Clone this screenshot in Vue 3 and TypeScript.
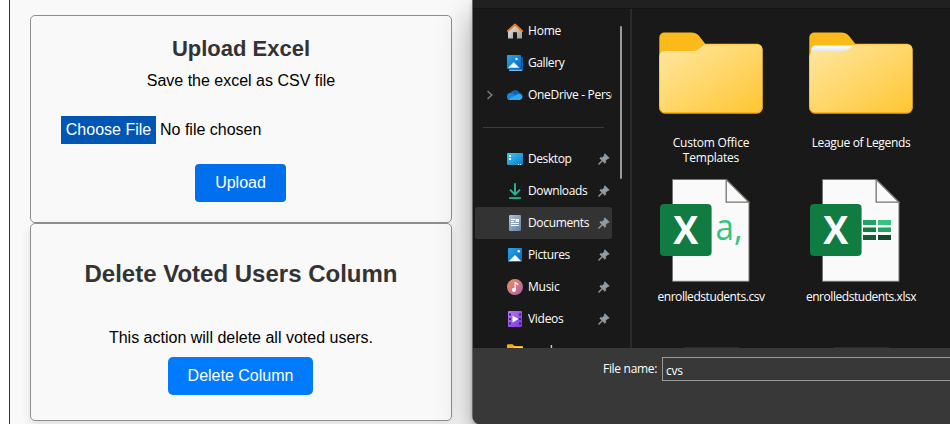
<script setup lang="ts">
import { ref } from 'vue'

interface Place {
  id: string
  label: string
  pinned?: boolean
  expandable?: boolean
  spacing: number
}

interface Item {
  kind: 'folder' | 'folder-full' | 'csv' | 'xlsx'
  label: string
  spacing: number
}

const places: Place[] = [
  { id: 'home', label: 'Home', spacing: -0.2 },
  { id: 'gallery', label: 'Gallery', spacing: -0.4 },
  { id: 'onedrive', label: 'OneDrive - Personal', expandable: true, spacing: -0.3 },
]

const pinned: Place[] = [
  { id: 'desktop', label: 'Desktop', pinned: true, spacing: -0.42 },
  { id: 'downloads', label: 'Downloads', pinned: true, spacing: -0.36 },
  { id: 'documents', label: 'Documents', pinned: true, spacing: -0.34 },
  { id: 'pictures', label: 'Pictures', pinned: true, spacing: -0.38 },
  { id: 'music', label: 'Music', pinned: true, spacing: -0.25 },
  { id: 'videos', label: 'Videos', pinned: true, spacing: -0.3 },
  { id: 'folder', label: 'cvsdocs', spacing: 0 },
]

const items: Item[] = [
  { kind: 'folder', label: 'Custom Office Templates', spacing: -0.22 },
  { kind: 'folder-full', label: 'League of Legends', spacing: -0.34 },
  { kind: 'csv', label: 'enrolledstudents.csv', spacing: -0.43 },
  { kind: 'xlsx', label: 'enrolledstudents.xlsx', spacing: -0.45 },
]

const selected = ref('documents')
const fileName = ref('cvs')
</script>

<template>
  <div class="screen">
    <main class="page">
      <section class="card upload">
        <h2>Upload Excel</h2>
        <p>Save the excel as CSV file</p>
        <div class="picker">
          <button class="choose">Choose File</button>
          <span>No file chosen</span>
        </div>
        <button class="btn hovered">Upload</button>
      </section>
      <section class="card remove">
        <h2>Delete Voted Users Column</h2>
        <p>This action will delete all voted users.</p>
        <button class="btn">Delete Column</button>
      </section>
    </main>

    <div class="dialog">
      <div class="toolbar"></div>
      <div class="body">
        <nav class="sidebar">
          <template v-for="(group, g) in [places, pinned]" :key="g">
            <div v-if="g === 1" class="divider"><i></i></div>
            <div
              v-for="p in group"
              :key="p.id"
              class="place"
              :class="{ active: p.id === selected }"
              @click="selected = p.id"
            >
              <span class="chevron">
                <svg v-if="p.expandable" width="8" height="12" viewBox="0 0 8 12">
                  <path d="M1.5 2 5.8 6 1.5 10" fill="none" stroke="#757575" stroke-width="1.7" />
                </svg>
              </span>
              <svg class="icon" width="16" height="16" viewBox="0 0 16 16">
                <defs>
                  <linearGradient :id="'g-' + p.id" x1="0" y1="0" x2="1" y2="1">
                    <template v-if="p.id === 'home'"><stop offset="0" stop-color="#e8e8e8" /><stop offset="1" stop-color="#9c9c9c" /></template>
                    <template v-else-if="p.id === 'music'"><stop offset="0.1" stop-color="#f08b5c" /><stop offset="1" stop-color="#a45fb5" /></template>
                    <template v-else-if="p.id === 'videos'"><stop offset="0" stop-color="#b57bf3" /><stop offset="1" stop-color="#7a35dc" /></template>
                    <template v-else-if="p.id === 'documents'"><stop offset="0" stop-color="#b4c2d6" /><stop offset="1" stop-color="#64809f" /></template>
                    <template v-else-if="p.id === 'desktop'"><stop offset="0" stop-color="#37cdea" /><stop offset="1" stop-color="#1176c9" /></template>
                    <template v-else><stop offset="0" stop-color="#2aa6ea" /><stop offset="1" stop-color="#0866bd" /></template>
                  </linearGradient>
                </defs>
                <template v-if="p.id === 'home'">
                  <path d="M1 7.5 8 1.5l7 6V15a.6.6 0 0 1-.6.6H10V9.3H6v6.3H1.600A.6.6 0 0 1 1 15Z" fill="url(#g-home)" />
                  <path d="M.9 8 8 1.500l7.100 6.500" fill="none" stroke="#ec7a1c" stroke-width="1.900" stroke-linejoin="round" stroke-linecap="round" />
                </template>
                <template v-else-if="p.id === 'gallery'">
                  <path d="M14.300 2H15a1 1 0 0 1 1 1v11.500a1.500 1.500 0 0 1-1.500 1.500H3a1 1 0 0 1-1-1v-.6h12.300Z" fill="#0a61b5" />
                  <path d="M2 14.400h13v1a1 1 0 0 1-.6.6H3a1 1 0 0 1-1-1Z" fill="#7db4e2" />
                  <rect width="14" height="14" rx="1" fill="url(#g-gallery)" />
                  <path d="M1 12.700 6.700 7.200l5.800 5.500Z" fill="#f2f9ff" />
                  <circle cx="9.500" cy="4" r="1.200" fill="#fff" />
                </template>
                <template v-else-if="p.id === 'onedrive'">
                  <path d="M3.200 7A5.200 5.200 0 0 1 12.600 5.800 3.700 3.700 0 0 1 15.300 11H2Z" fill="#0b69bd" />
                  <path d="M0 9.700A3.500 3.500 0 0 1 5.600 6.500L13 11.500 5 13H3.500A3.400 3.400 0 0 1 0 9.700Z" fill="#1686d6" />
                  <path d="M1.200 12.200 8.800 8.200A5 5 0 0 1 13 7.200 3 3 0 0 1 13 13H3.500a3.200 3.200 0 0 1-2.300-.8Z" fill="#31a7ef" />
                </template>
                <template v-else-if="p.id === 'desktop'">
                  <rect y="2" width="16" height="12" rx="1" fill="url(#g-desktop)" />
                  <path d="M2 4h2v2H2zM2 7h2v2H2z" fill="#fff" />
                  <path d="M11 13h1v1h-1zM13 13h1v1h-1z" fill="#e5f5ff" />
                </template>
                <template v-else-if="p.id === 'downloads'">
                  <path d="M8 .3v11M3 6.700l5 5 5-5" fill="none" stroke="#25b893" stroke-width="1.900" />
                  <rect x="2" y="14" width="12" height="2" rx=".5" fill="#16a78c" />
                </template>
                <template v-else-if="p.id === 'documents'">
                  <rect x="2" width="12" height="16" rx="1" fill="url(#g-documents)" />
                  <path d="M4 4h4v1H4zM4 6h3v1H4zM8.500 4H12v3H8.500zM4 8h8v1H4zM4 10h8v1H4z" fill="#fff" />
                </template>
                <template v-else-if="p.id === 'pictures'">
                  <rect x="1" y="1" width="14" height="14" rx="1" fill="url(#g-pictures)" />
                  <path d="m2 14 6-6 6 6Z" fill="#f4fbff" />
                  <circle cx="11.700" cy="4.200" r="1.200" fill="#fff" />
                </template>
                <template v-else-if="p.id === 'music'">
                  <circle cx="8" cy="8" r="8" fill="url(#g-music)" />
                  <path d="M8.200 3v8" stroke="#fff" stroke-width="1.300" />
                  <path d="M8.200 3.200c.4 1.300 2.400 1.300 2.600 3" fill="none" stroke="#fff" stroke-width="1.500" />
                  <circle cx="6.900" cy="11" r="2" fill="#fff" />
                </template>
                <template v-else-if="p.id === 'videos'">
                  <rect x="1" width="14" height="16" rx="1" fill="url(#g-videos)" />
                  <path d="M2 2.500h2v2H2zM2 7h2v2H2zM2 11.500h2v2H2zM12 2.500h2v2h-2zM12 7h2v2h-2zM12 11.500h2v2h-2z" fill="#4b1697" />
                  <path d="m5.500 4.500 6 3.500-6 3.500Z" fill="#fff" />
                </template>
                <template v-else>
                  <path d="M0 2.200A1 1 0 0 1 1 1.200h4.500L7.500 3H15a1 1 0 0 1 1 1v10H0Z" fill="#f9ae0e" />
                  <path d="M0 5.700h6L7.500 4H16v10H0Z" fill="#ffdc73" />
                </template>
              </svg>
              <span class="name" :style="{ letterSpacing: p.spacing + 'px' }">{{ p.label }}</span>
              <svg v-if="p.pinned" class="pin" width="12" height="12" viewBox="0 0 12 12">
                <path d="M6.900.6 11.400 5 10 6l-.5-.1-1.700 1.700.1 1.800-1 1L4.600 8.200 1.300 11.400.4 11.500.5 10.600 3.700 7.400 1.600 5.200l1-1 1.900.2L6.200 2.500 6 1.600Z" fill="#929ba3" stroke="#929ba3" stroke-width=".3" />
              </svg>
            </div>
          </template>
          <div class="scrollbar"></div>
        </nav>

        <div class="files">
          <div v-for="item in items" :key="item.label" class="tile">
            <svg width="104" height="104" viewBox="0 0 104 104">
              <template v-if="item.kind === 'folder' || item.kind === 'folder-full'">
                <defs>
                  <linearGradient :id="'f-' + item.kind" x1="0" y1="0" x2="1" y2="1">
                    <stop offset="0" stop-color="#ffe7a2" />
                    <stop offset="1" stop-color="#ffc632" />
                  </linearGradient>
                  <linearGradient :id="'p-' + item.kind" x1="0" y1="0" x2="0" y2="1">
                    <stop offset="0" stop-color="#fff" />
                    <stop offset="1" stop-color="#cdd5df" />
                  </linearGradient>
                </defs>
                <path d="M.3 12.500a5 5 0 0 1 5-5H32c4 0 6.500 1.500 8.500 4l5.700 7.200H98a5.500 5.500 0 0 1 5.500 5.500V83a5.500 5.500 0 0 1-5.500 5.500H5.800A5.500 5.500 0 0 1 .3 83Z" fill="#fbb91b" />
                <path v-if="item.kind === 'folder-full'" d="M2 25a5 5 0 0 1 5-4.500h39L37 30H2Z" :fill="'url(#p-' + item.kind + ')'" />
                <path d="M.3 31.500a5.500 5.500 0 0 1 5.500-5.500H33c4 0 6-1.200 8-3l2.400-2c1.500-1.100 2.500-1.500 4.500-1.500H98a5.500 5.500 0 0 1 5.500 5.500V82.500A5.500 5.500 0 0 1 98 87.500H5.800a5.500 5.500 0 0 1-5.500-5.500Z" :fill="'url(#f-' + item.kind + ')'" />
                <path d="M.6 82a5.500 5.500 0 0 0 5.500 6H97.700a5.500 5.500 0 0 0 5.500-6" fill="none" stroke="#e3a00f" stroke-width="1" />
              </template>
              <template v-else>
                <path d="M13.500.5H67.200L90 23.200V102.300H13.500Z" fill="#fafafa" stroke="#77736f" />
                <path d="M67.200.5V23.200H90Z" fill="#fafafa" stroke="#77736f" stroke-width="1.300" />
                <rect x="1" y="25" width="51.600" height="52" rx="4" fill="#107c41" />
                <text class="mark" x="14.300" y="65.300" textLength="25" lengthAdjust="spacingAndGlyphs">X</text>
                <text v-if="item.kind === 'csv'" class="comma" x="56.500" y="61" textLength="27" lengthAdjust="spacingAndGlyphs">a,</text>
                <g v-else>
                  <rect x="54" y="41" width="13" height="5" fill="#21a366" />
                  <rect x="69" y="41" width="13" height="5" fill="#33c481" />
                  <rect x="54" y="48.500" width="13" height="4.500" fill="#107c41" />
                  <rect x="69" y="48.500" width="13" height="4.500" fill="#21a366" />
                  <rect x="54" y="56" width="13" height="5" fill="#185c37" />
                  <rect x="69" y="56" width="13" height="5" fill="#134a2c" />
                </g>
              </template>
            </svg>
            <span class="label" :style="{ letterSpacing: item.spacing + 'px' }">{{ item.label }}</span>
          </div>
          <div v-for="n in 2" :key="n" class="tile next"><i></i></div>
        </div>
      </div>
      <footer class="footer">
        <label for="filename">File name:</label>
        <input id="filename" v-model="fileName" type="text" />
      </footer>
    </div>
  </div>
</template>

<style>
body {
  background: #fff;
  overflow: hidden;
}
</style>

<style scoped>
* {
  box-sizing: border-box;
}
.screen {
  display: flex;
  width: 950px;
  height: 424px;
  overflow: hidden;
  font-family: "Liberation Sans", Arial, sans-serif;
}
.page {
  width: 464px;
  flex: none;
  margin-left: 9px;
  padding: 15px 21px 0 20px;
  height: 424px;
  border-left: 1px solid #333;
  background: #f9f9f9;
}
.card {
  display: flex;
  flex-direction: column;
  align-items: center;
  width: 422px;
  border: 1px solid #8f8f8f;
  border-radius: 5px;
  font-size: 16px;
  color: #000;
  background: #f9f9f9;
}
.card h2,
.card p {
  margin: 0;
}
.card h2 {
  color: #333;
}
.upload {
  height: 208px;
  padding-top: 20px;
}
.upload h2 {
  font-size: 22px;
  line-height: 26px;
}
.upload p {
  margin-top: 9px;
  line-height: 20px;
}
.picker {
  align-self: stretch;
  display: flex;
  align-items: center;
  gap: 4px;
  margin: 25px 0 20px 30px;
}
.choose {
  width: 95px;
  height: 28px;
  padding: 0;
  border: 0;
  font: inherit;
  color: #fff;
  background: #0056b3;
}
.btn {
  width: 145px;
  height: 38px;
  margin-right: 1px;
  padding: 0;
  border: 0;
  border-radius: 5px;
  font: inherit;
  color: #fff;
  background: #007bff;
}
.btn.hovered {
  width: 91px;
  border-radius: 4px;
  background: #006fee;
}
.remove {
  height: 198px;
  padding-top: 36px;
  box-shadow: 0 4px 10px rgba(0, 0, 0, 0.1);
}
.remove h2 {
  font-size: 24px;
  line-height: 28px;
}
.remove p {
  margin: 40px 0 9px;
  line-height: 20px;
}
.dialog {
  display: flex;
  flex-direction: column;
  flex: 1;
  min-width: 0;
  height: 424px;
  position: relative;
  border-radius: 0 0 0 8px;
  background: #191919;
  box-shadow: 0 0 0 1px #686868, 0 2px 5px rgba(0, 0, 0, 0.3), 0 16px 34px rgba(0, 0, 0, 0.38);
  font-family: "Open Sans", "Noto Sans", sans-serif;
  font-size: 12px;
  color: #fff;
  overflow: hidden;
}
.toolbar {
  height: 8px;
  flex: none;
  background: #202020;
}
.body {
  display: flex;
  height: 340px;
  flex: none;
  border-top: 1px solid #131313;
  overflow: hidden;
}
.sidebar {
  position: relative;
  width: 159px;
  flex: none;
  padding: 6px 18px 0 2px;
  border-right: 2px solid #2a2a2a;
}
.place {
  display: flex;
  align-items: center;
  height: 32px;
  border-radius: 2px;
}
.place.active {
  background: #333;
}
.chevron {
  width: 32px;
  display: flex;
  padding-left: 11px;
  flex: none;
}
.icon {
  flex: none;
}
.name {
  flex: 1;
  min-width: 0;
  margin-left: 5px;
  padding-bottom: 1px;
  white-space: nowrap;
  overflow: hidden;
}
.pin {
  flex: none;
  margin: 0 2px 0 -10px;
}
.divider {
  display: flex;
  align-items: center;
  height: 32px;
  padding: 0 8px;
}
.divider i {
  flex: 1;
  height: 1px;
  background: #3d3d3d;
}
.scrollbar {
  position: absolute;
  top: 17px;
  right: 8px;
  width: 2px;
  height: 153px;
  border-radius: 1px;
  background: #9b9b9b;
}
.files {
  display: grid;
  grid-template-columns: 150px 150px;
  grid-auto-rows: 154px;
  align-content: start;
  padding: 16px 0 0 4px;
}
.tile {
  display: flex;
  flex-direction: column;
  align-items: center;
}
.tile svg {
  flex: none;
}
.label {
  width: 120px;
  margin-top: 6px;
  line-height: 15px;
  text-align: center;
}
.mark,
.comma {
  font-family: "Open Sans", sans-serif;
}
.mark {
  font-size: 39px;
  font-weight: 700;
  fill: #fff;
}
.comma {
  font-size: 36px;
  fill: #33c481;
}
.next i {
  width: 55px;
  height: 40px;
  margin-top: 14px;
  background: #2b2b2b;
}
.footer {
  display: flex;
  align-items: flex-start;
  flex: 1;
  padding: 9px 0 0 130px;
  background: #383838;
}
.footer label {
  width: 54px;
  line-height: 24px;
  letter-spacing: -0.3px;
  white-space: nowrap;
}
.footer input {
  flex: 1;
  height: 24px;
  margin-left: 5px;
  padding: 2px 3px 0;
  border: 1px solid #9b9b9b;
  border-right: 0;
  outline: 0;
  font: inherit;
  letter-spacing: -0.2px;
  color: #fff;
  background: #383838;
}
</style>
